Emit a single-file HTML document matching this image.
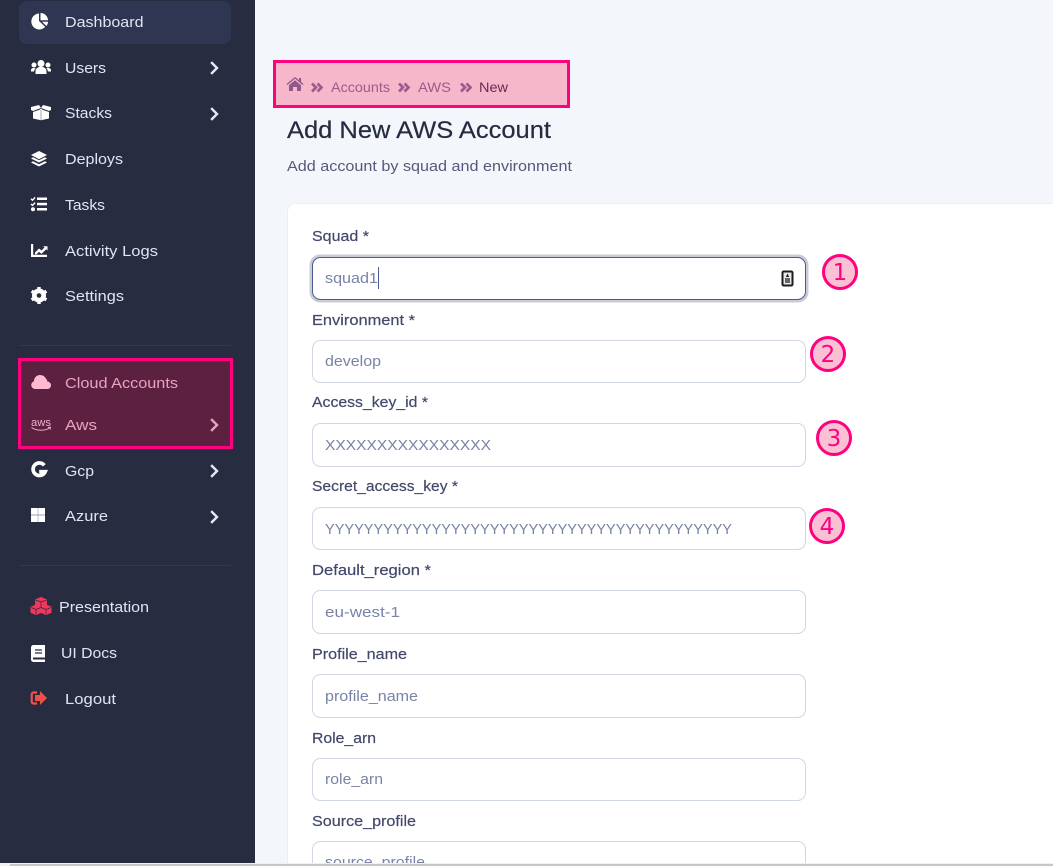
<!DOCTYPE html>
<html lang="en">
<head>
<meta charset="utf-8">
<title>Add New AWS Account</title>
<style>
html,body{margin:0;padding:0;width:1053px;height:866px;overflow:hidden;background:#f3f7fb}
svg{display:block;position:absolute;left:0;top:0}
text{font-family:"Liberation Sans",sans-serif;font-size:15px;white-space:pre}
.n text{fill:#dfe5f2}
.h text{fill:#e9a3bf}
.l text{fill:#44496b;font-size:14.5px;stroke:#44496b;stroke-width:.2px}
.v text{fill:#7883a6;font-size:15px}
.c text{font-family:"DejaVu Sans",sans-serif;font-size:23px;fill:#ff007f;text-anchor:middle}
.b text{font-size:14px;fill:#9c5b8c}
.inp{fill:#fff;stroke:#d1d6e4;stroke-width:1}
.chev{fill:none;stroke:#e4eaf5;stroke-width:2.4;stroke-linecap:square;stroke-linejoin:miter}
.dbl{fill:none;stroke:#9c5b8c;stroke-width:2.7}
</style>
</head>
<body>
<svg width="1053" height="866" viewBox="0 0 1053 866" xmlns="http://www.w3.org/2000/svg">
  <!-- backgrounds -->
  <rect x="0" y="0" width="1053" height="866" fill="#f3f7fb"/>
  <rect x="287.500" y="203.500" width="790" height="700" rx="8" fill="#fff" stroke="#ebeef4"/>

  <!-- sidebar -->
  <rect x="0" y="0" width="255" height="863" fill="#282c40"/>
  <rect x="19" y="1" width="212" height="43" rx="8" fill="#2f3652"/>
  <rect x="19" y="345" width="212" height="1" fill="#33384f"/>
  <rect x="19" y="565" width="212" height="1" fill="#33384f"/>
  <rect x="19.500" y="359.500" width="212" height="88" fill="#5c2140" stroke="#ff007f" stroke-width="3"/>

  <g class="n">
    <text x="65" y="27" textLength="78.500" lengthAdjust="spacingAndGlyphs">Dashboard</text>
    <text x="65" y="73" textLength="41" lengthAdjust="spacingAndGlyphs">Users</text>
    <text x="65" y="118" textLength="47" lengthAdjust="spacingAndGlyphs">Stacks</text>
    <text x="65" y="164" textLength="58" lengthAdjust="spacingAndGlyphs">Deploys</text>
    <text x="65" y="210" textLength="40" lengthAdjust="spacingAndGlyphs">Tasks</text>
    <text x="65" y="256" textLength="93" lengthAdjust="spacingAndGlyphs">Activity Logs</text>
    <text x="65" y="301" textLength="59" lengthAdjust="spacingAndGlyphs">Settings</text>
    <text x="65" y="476" textLength="29" lengthAdjust="spacingAndGlyphs">Gcp</text>
    <text x="65" y="521" textLength="43" lengthAdjust="spacingAndGlyphs">Azure</text>
    <text x="59" y="612" textLength="90" lengthAdjust="spacingAndGlyphs">Presentation</text>
    <text x="61" y="658" textLength="56" lengthAdjust="spacingAndGlyphs">UI Docs</text>
    <text x="65" y="704" textLength="51" lengthAdjust="spacingAndGlyphs">Logout</text>
  </g>
  <g class="h">
    <text x="65" y="388" textLength="113" lengthAdjust="spacingAndGlyphs">Cloud Accounts</text>
    <text x="65" y="430" textLength="32" lengthAdjust="spacingAndGlyphs">Aws</text>
  </g>

  <!-- chevrons -->
  <path class="chev" d="M212 63l5 5-5 5"/>
  <path class="chev" d="M212 109l5 5-5 5"/>
  <path class="chev" style="stroke:#e9a3bf" d="M212 420l5 5-5 5"/>
  <path class="chev" d="M212 466l5 5-5 5"/>
  <path class="chev" d="M212 512l5 5-5 5"/>

  <!-- icons -->
  <g fill="#fff">
    <!-- pie -->
    <path d="M39 13.500a8 8 0 1 0 6.200 13.400L39 21z"/>
    <path d="M40.500 13v7.200h7.500a7.500 7.500 0 0 0-7.500-7.200z"/>
    <path d="M42 21.800h6.200a8 8 0 0 1-1.800 4.200z"/>
    <!-- users -->
    <circle cx="41" cy="63.500" r="3.500"/><circle cx="34" cy="65" r="2.500"/><circle cx="48" cy="65" r="2.500"/>
    <path d="M35.500 74v-3a5.500 4.200 0 0 1 11 0v3z"/>
    <path d="M31 71.500v-1.500a2.500 2.500 0 0 1 2.500-2h2.200a6 6 0 0 0-1.700 3.500z"/>
    <path d="M51 71.500v-1.500a2.500 2.500 0 0 0-2.500-2h-2.200a6 6 0 0 1 1.700 3.500z"/>
    <!-- box open -->
    <path d="M31 107l8-2 2 3-8 3-2-1z"/>
    <path d="M51 107l-8-2-2 3 8 3 2-1z"/>
    <path d="M33 112l6-2 2-1.200 2 1.200 6 2v6.500l-8 1.800-8-1.800z"/>
    <!-- layers -->
    <path d="M39 151l8 4-8 4.200-8-4.200z"/>
    <path d="M33 157.300l6 3 6-3 2 1.200-8 4-8-4z"/>
    <path d="M33 161.300l6 3 6-3 2 1.200-8 4-8-4z"/>
    <!-- tasks -->
    <rect x="37" y="197.500" width="10" height="2.500"/><rect x="37" y="202.800" width="10" height="2.500"/><rect x="37" y="208" width="10" height="2.500"/>
    <circle cx="33" cy="209.300" r="2"/>
    <path d="M31 198.800l1.500 1.400 2.600-2.800M31 204l1.500 1.400 2.600-2.800" fill="none" stroke="#fff" stroke-width="1.400"/>
    <!-- chart line -->
    <path d="M31 244h2.200v10.800H47v2.200H31z"/>
    <path d="M35 252.500l4-4 2.500 2 3-3-1.300-1.300h4.300v4.300l-1.300-1.300-4.700 4.700-2.500-2-2.500 2.500H35z"/>
    <!-- G -->
    <path d="M44.300 465.300a6.300 6.300 0 1 0 .9 6.400h-6" fill="none" stroke="#fff" stroke-width="3.700"/>
    <!-- windows -->
    <rect x="31" y="508" width="14" height="14"/>
    <!-- book -->
    <path d="M33.500 645H45v17H33.500a2.500 2.500 0 0 1-2.500-2.500v-12a2.500 2.500 0 0 1 2.500-2.500z"/>
  </g>
  <rect x="37.500" y="508" width="1" height="14" fill="#a9c7e6"/>
  <rect x="31" y="514.500" width="14" height="1" fill="#9c9fab"/>
  <!-- gear -->
  <circle cx="39" cy="295.500" r="5.300" fill="none" stroke="#fff" stroke-width="3.400"/>
  <path d="M39 287v17M31.600 291.200l14.800 8.600M31.600 299.800l14.800-8.600" stroke="#fff" stroke-width="3.400"/>
  <circle cx="39" cy="295.500" r="2.300" fill="#282c40"/>
  <!-- book lines -->
  <path d="M35 650h7M35 653h7" stroke="#282c40" stroke-width="1.200"/>
  <rect x="33" y="657.500" width="12" height="2" fill="#282c40"/>
  <!-- box seam -->
  <path d="M41 110v10" stroke="#282c40" stroke-width=".4"/>
  <!-- cloud -->
  <path d="M35 389a4 4 0 0 1-1-7.800 6 6 0 0 1 6-6.200 6.500 6.500 0 0 1 5.800 3.500 3.800 3.800 0 0 1 1.500 3 3.800 3.800 0 0 1 3.700 3.800 3.600 3.600 0 0 1-3.700 3.700z" fill="#ffb9d0"/>
  <!-- aws -->
  <text x="31" y="426" textLength="20" lengthAdjust="spacingAndGlyphs" style="font-size:11px;fill:#f0b3cb">aws</text>
  <path d="M31.500 427.500c5 3.500 13 3.500 18 .5" fill="none" stroke="#f0b3cb" stroke-width="1"/>
  <path d="M48 427.500l2.500-.3-.5 2.500" fill="none" stroke="#f0b3cb" stroke-width=".9"/>
  <!-- cubes -->
  <g fill="#f0375e">
    <path d="M41 597l6 2.500v6.500l-6 2.500-6-2.500v-6.500z"/>
    <path d="M36 604.500l5.500 2.300v6l-5.500 2.300-5.500-2.300v-6z"/>
    <path d="M46 604.500l5.500 2.300v6l-5.500 2.300-5.500-2.300v-6z"/>
  </g>
  <path d="M35.500 600l5.500 2 5.500-2M41 602v5M31 607.500l5 2 5-2M36 609.500v5M41 607.500l5 2 5-2M46 609.500v5" fill="none" stroke="#282c40" stroke-width=".7"/>
  <!-- logout -->
  <path d="M37 692.500h-3.500a1.800 1.800 0 0 0-1.800 1.800v7.400a1.800 1.800 0 0 0 1.800 1.800H37" fill="none" stroke="#f0504a" stroke-width="2.200"/>
  <path d="M40 691l7 7-7 7v-4h-5v-6h5z" fill="#f0504a"/>

  <!-- breadcrumb -->
  <rect x="274.500" y="61.500" width="294" height="45" fill="#f6b7cb" stroke="#ff007f" stroke-width="3"/>
  <path d="M299 78h2v3.800l2.500 2.200-.9 1-7.600-6.400-7.600 6.400-.9-1 8.500-7 4 3.300z" fill="#8f5a88"/>
  <path d="M295 80.300l6 5V91h-4v-4h-4v4h-4v-5.700z" fill="#8f5a88"/>
  <g class="b">
    <text x="331" y="92" textLength="59" lengthAdjust="spacingAndGlyphs">Accounts</text>
    <text x="418" y="92" textLength="33" lengthAdjust="spacingAndGlyphs">AWS</text>
    <text x="479" y="92" textLength="29" lengthAdjust="spacingAndGlyphs" style="fill:#6b2a55">New</text>
  </g>
  <path class="dbl" d="M312 83.500l4 4-4 4M317.500 83.500l4 4-4 4"/>
  <path class="dbl" d="M399 83.500l4 4-4 4M404.500 83.500l4 4-4 4"/>
  <path class="dbl" d="M461 83.500l4 4-4 4M466.500 83.500l4 4-4 4"/>

  <!-- heading -->
  <text x="287" y="138" textLength="264" lengthAdjust="spacingAndGlyphs" style="font-size:24px;fill:#252c40;stroke:#252c40;stroke-width:.2px">Add New AWS Account</text>
  <text x="287" y="171" textLength="285" lengthAdjust="spacingAndGlyphs" style="fill:#54597a">Add account by squad and environment</text>

  <!-- labels -->
  <g class="l">
    <text x="312" y="241" textLength="57" lengthAdjust="spacingAndGlyphs">Squad *</text>
    <text x="312" y="325" textLength="103" lengthAdjust="spacingAndGlyphs">Environment *</text>
    <text x="312" y="407" textLength="116" lengthAdjust="spacingAndGlyphs">Access_key_id *</text>
    <text x="312" y="491" textLength="146" lengthAdjust="spacingAndGlyphs">Secret_access_key *</text>
    <text x="312" y="575" textLength="119" lengthAdjust="spacingAndGlyphs">Default_region *</text>
    <text x="312" y="659" textLength="95" lengthAdjust="spacingAndGlyphs">Profile_name</text>
    <text x="312" y="743" textLength="64" lengthAdjust="spacingAndGlyphs">Role_arn</text>
    <text x="312" y="826" textLength="104" lengthAdjust="spacingAndGlyphs">Source_profile</text>
  </g>

  <!-- inputs -->
  <rect x="311" y="256" width="496" height="45" rx="9" fill="#fff" stroke="#c9ccd5" stroke-width="3"/>
  <rect x="312.500" y="257.500" width="493" height="42" rx="8" fill="#fff" stroke="#4a5a94"/>
  <rect class="inp" x="312.500" y="340.500" width="493" height="42" rx="8"/>
  <rect class="inp" x="312.500" y="423.500" width="493" height="43" rx="8"/>
  <rect class="inp" x="312.500" y="507.500" width="493" height="42" rx="8"/>
  <rect class="inp" x="312.500" y="590.500" width="493" height="43" rx="8"/>
  <rect class="inp" x="312.500" y="674.500" width="493" height="43" rx="8"/>
  <rect class="inp" x="312.500" y="758.500" width="493" height="42" rx="8"/>
  <rect class="inp" x="312.500" y="841.500" width="493" height="42" rx="8"/>

  <g class="v">
    <text x="325" y="283" textLength="53" lengthAdjust="spacingAndGlyphs">squad1</text>
    <text x="325" y="366" textLength="56" lengthAdjust="spacingAndGlyphs">develop</text>
    <text x="325" y="450" textLength="166" lengthAdjust="spacingAndGlyphs">XXXXXXXXXXXXXXXX</text>
    <text x="325" y="534" textLength="407" lengthAdjust="spacingAndGlyphs">YYYYYYYYYYYYYYYYYYYYYYYYYYYYYYYYYYYYYYYYYY</text>
    <text x="325" y="617" textLength="75" lengthAdjust="spacingAndGlyphs">eu-west-1</text>
    <text x="325" y="701" textLength="93" lengthAdjust="spacingAndGlyphs">profile_name</text>
    <text x="325" y="784" textLength="58" lengthAdjust="spacingAndGlyphs">role_arn</text>
    <text x="325" y="867" textLength="100" lengthAdjust="spacingAndGlyphs">source_profile</text>
  </g>
  <rect x="378" y="267" width="1" height="22" fill="#4a5a94"/>

  <!-- key icon -->
  <rect x="782.500" y="271.500" width="10" height="14" rx="1.200" fill="#e8e8e8" stroke="#1c1c1c" stroke-width="2"/>
  <path d="M787.500 273.500l1.600 3.500h-3.200z" fill="#1c1c1c"/>
  <rect x="785" y="278" width="5" height="5" fill="#666"/>

  <!-- number circles -->
  <g fill="#fcc0d5" stroke="#ff007f" stroke-width="3">
    <circle cx="840" cy="272" r="16.500"/>
    <circle cx="828" cy="354" r="16.500"/>
    <circle cx="834" cy="438" r="16.500"/>
    <circle cx="827" cy="526" r="16.500"/>
  </g>
  <g class="c">
    <text x="840" y="280">1</text>
    <text x="828" y="362">2</text>
    <text x="834" y="446">3</text>
    <text x="827" y="534">4</text>
  </g>

  <!-- bottom edge -->
  <rect x="0" y="863" width="1053" height="3" fill="#f0f0ee"/>
  <rect x="10" y="864" width="1043" height="2" fill="#c8c8c2"/>
</svg>
</body>
</html>
